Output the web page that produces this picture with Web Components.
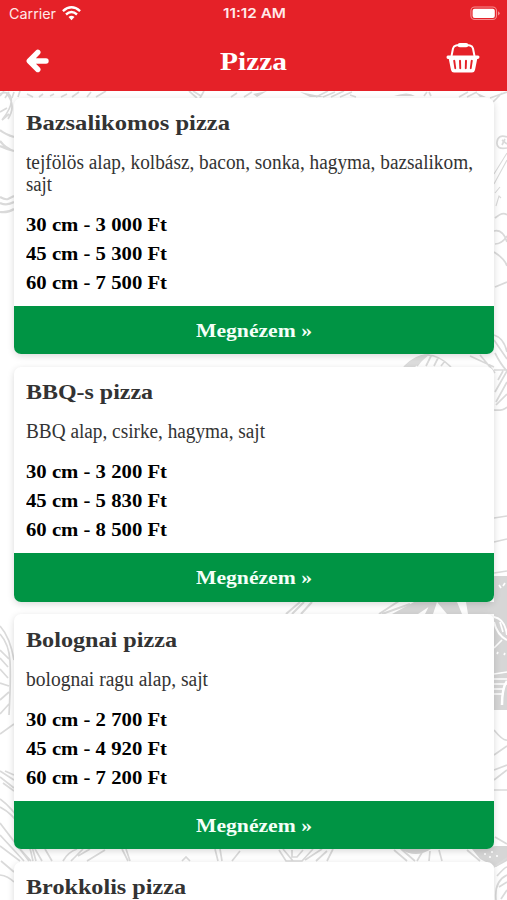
<!DOCTYPE html>
<html lang="hu">
<head>
<meta charset="utf-8">
<title>Pizza</title>
<style>
html,body{margin:0;height:900px;overflow:hidden;background:#fff}
</style>
</head>
<body>
<pizza-app></pizza-app>
<script>
// Single line of text whose glyphs are widened or narrowed to fill a given width.
customElements.define('fit-text', class extends HTMLElement {
  connectedCallback() {
    const target = +this.getAttribute('width');
    this.attachShadow({mode:'open'}).innerHTML =
      `<style>:host{display:block;white-space:pre;width:${target}px}span{display:inline-block;transform-origin:0 50%}</style><span><slot></slot></span>`;
    const s = this.shadowRoot.querySelector('span');
    s.style.transform = `scaleX(${(target / s.getBoundingClientRect().width).toFixed(4)})`;
  }
});

customElements.define('status-bar', class extends HTMLElement {
  connectedCallback() {
    this.attachShadow({mode:'open'}).innerHTML = `
<style>
:host{display:grid;grid-template-columns:1fr auto 1fr;align-items:center;height:27px;padding:0 6px 0 9px;font:14px/27px Inter,sans-serif;color:#ffe9e9}
.l{display:flex;align-items:center;gap:6px}
.t{font-weight:600;font-size:13.500px;margin-right:2px}
.b{justify-self:end}
svg{display:block}
</style>
<div class="l"><fit-text width="47">Carrier</fit-text>
<svg width="19" height="15" viewBox="0 0 19 15" fill="none" stroke="#fff" stroke-width="2.4"><path d="M.9 5.2Q9.500-2.500 18.100 5.200M4 8.500Q9.500 3.600 15 8.500"/><path d="M6.500 11Q9.500 8.500 12.500 11L9.500 14.200z" fill="#fff" stroke="none"/></svg></div>
<div class="t"><fit-text width="63">11:12 AM</fit-text></div>
<svg class="b" width="31" height="15" viewBox="0 0 31 15"><rect x=".9" y="1" width="25.600" height="12.500" rx="3.800" fill="none" stroke="#f58d90" stroke-width="1.100"/><rect x="2.600" y="2.700" width="22.200" height="9.200" rx="2" fill="#fff"/><path d="M28 5.200q3.400 2 0 4.400z" fill="#f58d90"/></svg>`;
  }
});

customElements.define('nav-bar', class extends HTMLElement {
  connectedCallback() {
    this.attachShadow({mode:'open'}).innerHTML = `
<style>
:host{display:grid;grid-template-columns:1fr auto 1fr;align-items:center;height:64px;padding:0 27px 0 26px;box-sizing:border-box;color:#fff}
.t{font:bold 26px/30px "Liberation Serif",serif;padding-top:5px}
.k{justify-self:end;margin-bottom:3px}
.a{margin-top:3px}
svg{display:block}
</style>
<svg class="a" width="24" height="26" viewBox="0 0 24 26" fill="none" stroke="#fff" stroke-width="5.400" stroke-linecap="round" stroke-linejoin="round"><path d="M11.800 4.300L3.300 13L11.800 21.500M4.500 13H20"/></svg>
<div class="t"><fit-text width="67">Pizza</fit-text></div>
<svg class="k" width="34" height="32" viewBox="0 0 34 32"><g fill="none" stroke="#fff" stroke-linecap="round"><path d="M5.600 13.500L7 6.500Q7.600 4 10 3.500L13 3M28.400 13.500L27 6.500Q26.400 4 24 3.500L21 3" stroke-width="2"/><path d="M13.800 3.200H20.200" stroke-width="4.200"/></g><path fill="#fff" fill-rule="evenodd" d="M2 13.500H32Q33.500 13.500 33.500 15T32 17H31.200L29 28Q28.400 30.500 26 30.500H8Q5.600 30.500 5 28L2.800 17H2Q.5 17 .5 15.200T2 13.500M7.200 18.500L8.400 26.500Q9.200 28 10.200 26.500L9.200 18.500Q8.200 17 7.200 18.500M13 18.500L13.300 26.500Q14.300 28 15.200 26.500L15 18.500Q14 17 13 18.500M19 18.500L18.800 26.500Q19.700 28 20.700 26.500L21 18.500Q20 17 19 18.500M24.800 18.500L23.800 26.500Q24.800 28 25.600 26.500L26.800 18.500Q25.800 17 24.800 18.500"/></svg>`;
  }
});

// Pale engraved food sketches that show around the cards.
customElements.define('sketch-backdrop', class extends HTMLElement {
  connectedCallback() {
    this.attachShadow({mode:'open'}).innerHTML = `
<style>:host{position:absolute;inset:0;z-index:0}svg{display:block}</style>
<svg width="507" height="900" viewBox="0 0 507 900" fill="none" stroke="#dadada" stroke-width="1.700">
<path d="M0 96L4 91M5 98L9 92M12 98L14 92M18 97L20 91M27 94L33 97M39 97L43 94M50 96L54 94M61 97L67 94M72 97L79 92M87 97L91 92M96 97L106 91M189 91L197 98M193 91L201 96M200 98L204 91M231 97L237 93M244 97L252 92"/>
<path d="M253 94L267 91L257 97zM300 92L325 97H310zM394 96Q408 91 415 96zM475 92L486 97L480 97z" fill="#d6d6d6" stroke="none"/>
<path d="M316 97L328 91M323 97L335 92M331 97L344 91M340 97L352 92M350 95L356 97M424 96L427 92M431 96L429 92M459 97L468 92M467 97L477 92M493 102L502 93M490 98L507 92"/>
<path d="M0 94Q9 90 11 98T2 120M6 93Q17 105 8 119M0 112L7 108M2 120L9 114"/>
<path d="M0 130Q5 134 14 137M0 141Q6 149 14 151M0 146Q6 149 14 151M0 197Q5 200 8 199L14 196M0 203Q7 206 14 202M0 212Q8 213 14 209" stroke-width="2.200"/>
<path d="M507 137Q498 134 497 142T507 148M502 140L507 144M502 145L505 139"/>
<path d="M494 184L507 160M494 174L507 153M495 193L500 187M496 206L499 196L501 198" stroke-width="1.100"/>
<path d="M494 231Q503 229 507 242M494 252Q505 259 507 266M495 244Q502 244 507 236M495 287L507 282M495 218Q503 211 507 215"/>
<path d="M404 367Q427 343 451 367M410 366L421 357M417 366L425 355M426 366L431 356M434 366L438 358M441 366L445 361M470 356L494 367M480 355L495 373"/>
<path d="M404 367Q417 354 430 354L415 367z" fill="#ddd" stroke="none"/>
<path d="M494 335Q504 338 507 352M494 340L507 359M495 353Q501 365 507 371M494 370H507M498 380L503 371M495 392L507 371M496 402L507 382M496 405L507 394M494 410Q503 411 507 407"/>
<path d="M286 614L300 602M292 614L304 602M301 614L312 602M379 614L399 601M382 614L410 604" stroke-width="2"/>
<path d="M392 614L414 602H436L418 614zM425 614L431 602H437L433 614zM437 602H457L462 614H447zM466 602H494V614H468z" fill="#d6d6d6" stroke="none"/>
<path d="M494 518L507 516M494 542L507 539M494 573L507 571"/>
<path d="M494 576H507V710H494z" fill="#d6d6d6" stroke="none"/>
<g stroke="#fff"><path d="M494 617Q505 619 507 635M494 622Q497 635 507 640" stroke-width="2"/><path d="M500 622L503 632M494 648L502 640M499 585L501 588M503 586L505 583M497 654L498 652M504 655L505 653"/><path d="M494 674L507 672M494 679H507M494 684H507M494 689H503M494 694H502"/><path d="M507 681Q502 688 502 705" stroke-width="2.500"/></g>
<path d="M494 730Q503 741 507 740M494 755L507 746M494 770L507 765M494 780L507 770M494 790H507"/>
<path d="M0 626Q10 637 14 660M0 634Q9 644 10 661T9 715M0 650L9 659M0 658L8 667M0 669L8 678M0 683L9 686M0 700L9 692M0 714L9 704M0 734L14 724"/>
<path d="M0 771L14 780M0 777L14 788M5 771L14 775M3 783L14 791M0 799Q25 817 36 861M0 807Q25 820 33 861M0 823L29 861M0 846L20 861M0 835L24 861M0 875Q8 876 14 882M1 861L14 872M20 849L31 861M35 849L42 861M45 849L52 861M63 861Q68 852 77 849M71 861L83 849M78 856L90 849M87 861L105 850M122 849L128 861M126 849L130 861M182 861L186 857L190 861M215 849L218 861M220 849L222 861M232 861L240 851"/>
<path d="M279 850L286 861H302L313 849M283 849L293 861M292 850V857H297L303 850M305 860L322 849M316 861L327 851M327 861L333 849M394 850L407 861M401 849L415 861M417 861L424 849M429 861L430 851M439 850L442 861M467 850L480 861M474 849L490 861"/>
<path d="M400 849H431Q416 859 400 849M472 849L496 846H507V861L496 867L480 859z" fill="#d6d6d6" stroke="none"/>
<path d="M484 854H486M489 857H491M491 852H493M496 856H498" stroke="#fff"/>
<path d="M494 867L507 858M497 876Q505 867 507 867M496 900Q494 881 507 875M501 899L507 890M499 887L507 882M495 837L507 844"/>
</svg>`;
  }
});

customElements.define('pizza-card', class extends HTMLElement {
  connectedCallback() {
    // A card without prices shows only its heading.
    const brief = this.hasAttribute('brief');
    this.attachShadow({mode:'open'}).innerHTML = `
<style>
:host{display:block;border-radius:7px;background:#fff;box-shadow:0 2px 7px rgba(0,0,0,.15);overflow:hidden;font-family:"Liberation Serif",serif}
.body{padding:12.300px 12px 9.100px}
.n{font-size:21.500px;line-height:26px;font-weight:bold;color:#333}
.d{margin:15px 0 15.100px;font-size:20px;line-height:22px;color:#333}
.p{font-size:19.500px;line-height:29px;font-weight:bold;color:#000}
.btn{height:48.500px;box-sizing:border-box;padding-top:.8px;background:#009444;color:#f4fff8;display:flex;justify-content:center;font-size:19px;line-height:48.500px;font-weight:bold}
</style>
<div class="body"><div class="n"><slot name="name"></slot></div>${brief ? '' : '<div class="d"><slot name="desc"></slot></div><div class="p"><slot></slot></div>'}</div>
${brief ? '' : '<div class="btn"><fit-text width="116">Megnézem »</fit-text></div>'}`;
  }
});

customElements.define('pizza-app', class extends HTMLElement {
  connectedCallback() {
    const items = [
      [['Bazsalikomos pizza',204],[['tejfölös alap, kolbász, bacon, sonka, hagyma, bazsalikom,',447],['sajt',26]],['3 000','5 300','7 500']],
      [['BBQ-s pizza',127],[['BBQ alap, csirke, hagyma, sajt',239]],['3 200','5 830','8 500']],
      [['Bolognai pizza',151],[['bolognai ragu alap, sajt',182]],['2 700','4 920','7 200']],
      [['Brokkolis pizza',160],[],[]]
    ];
    const line = (t, w, slot) => `<fit-text width="${w}"${slot ? ` slot="${slot}"` : ''}>${t}</fit-text>`;
    this.attachShadow({mode:'open'}).innerHTML = `
<style>
:host{display:block;position:relative;width:507px;height:900px;overflow:hidden;background:#fff}
header{position:relative;z-index:2;background:#e52128}
main{position:relative;z-index:1;display:flex;flex-direction:column;gap:12.500px;padding:6.500px 12.800px 0 13.500px}
</style>
<sketch-backdrop></sketch-backdrop>
<header><status-bar></status-bar><nav-bar></nav-bar></header>
<main>${items.map(([n, d, p]) => `<pizza-card${p.length ? '' : ' brief'}>${line(n[0], n[1], 'name')}${d.map(x => line(x[0], x[1], 'desc')).join('')}${p.map((x, i) => line(['30','45','60'][i] + ' cm - ' + x + ' Ft', 141)).join('')}</pizza-card>`).join('')}</main>`;
  }
});
</script>
</body>
</html>
